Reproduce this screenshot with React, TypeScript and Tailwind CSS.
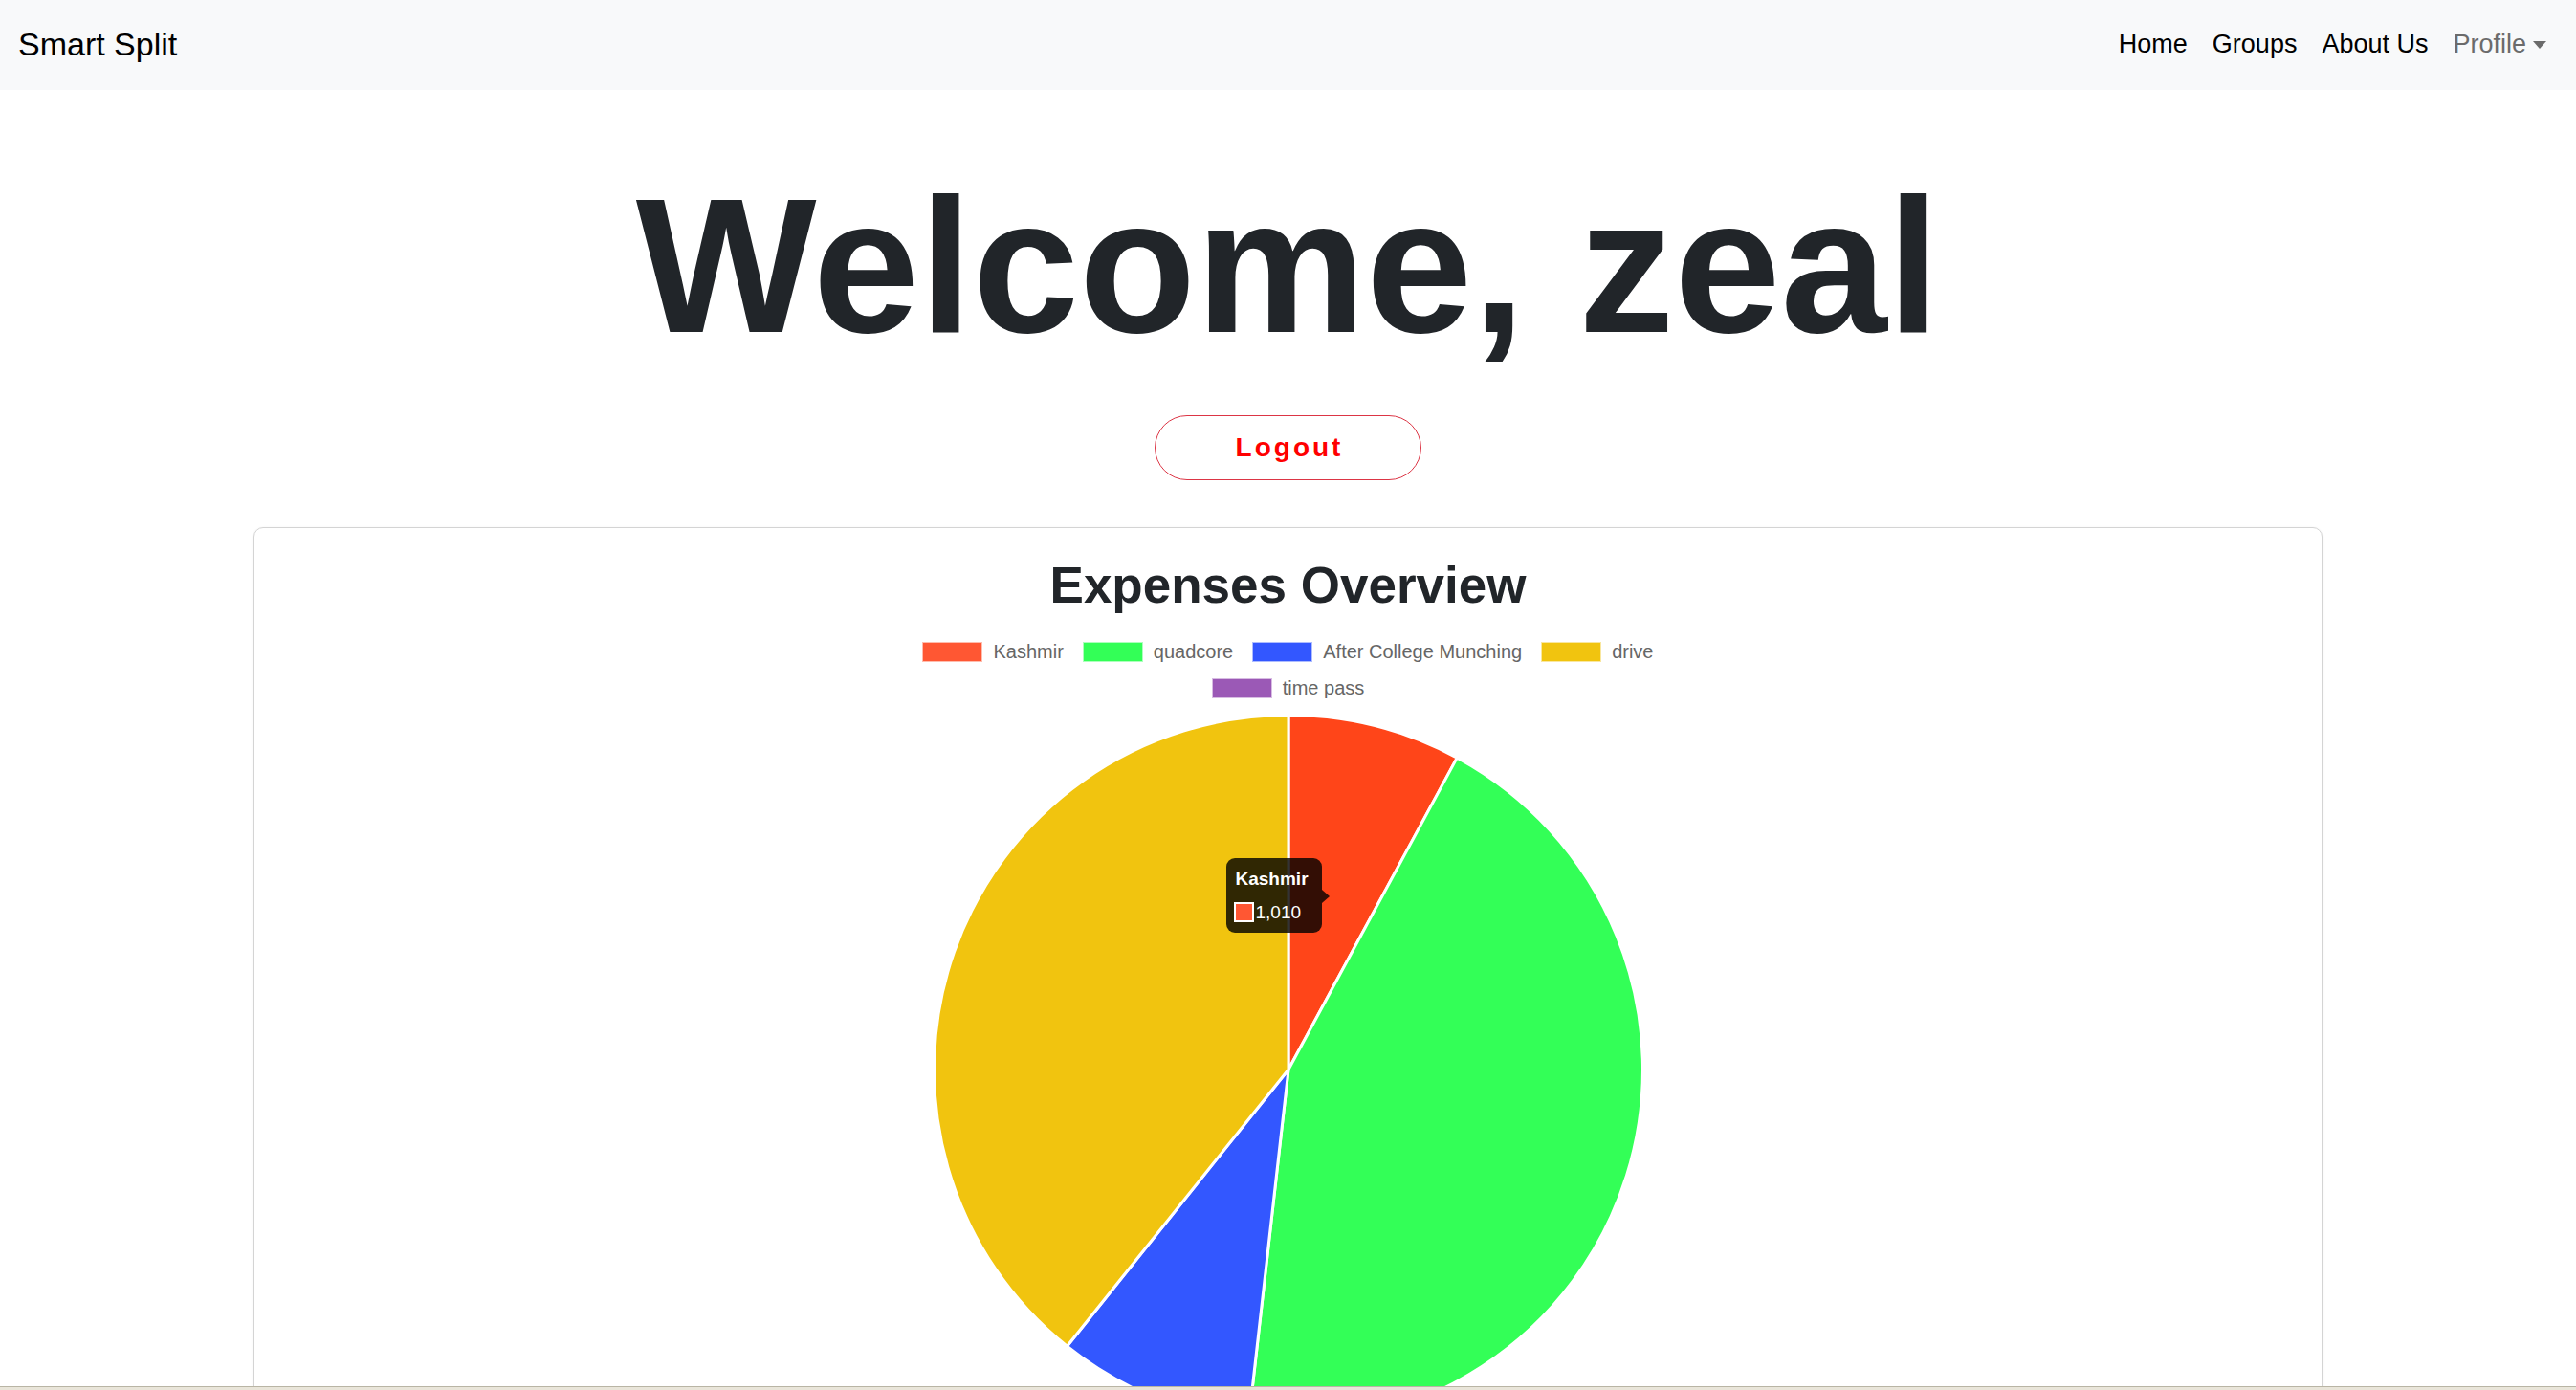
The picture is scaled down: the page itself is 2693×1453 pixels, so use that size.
const slices = [
  { label: "Kashmir", value: 1010, color: "#ff5733", fill: "#ff4519" },
  { label: "quadcore", value: 5620, color: "#33ff57", fill: "#33ff57" },
  { label: "After College Munching", value: 1145, color: "#3357ff", fill: "#3357ff" },
  { label: "drive", value: 5025, color: "#f1c40f", fill: "#f1c40f" },
  { label: "time pass", value: 0, color: "#9b59b6", fill: "#9b59b6" },
];

const legendRows = [slices.slice(0, 4), slices.slice(4)];

function arcPath(cx: number, cy: number, r: number, a0: number, a1: number) {
  const pt = (a: number) => [
    cx + r * Math.sin((a * Math.PI) / 180),
    cy - r * Math.cos((a * Math.PI) / 180),
  ];
  const [x0, y0] = pt(a0);
  const [x1, y1] = pt(a1);
  const large = a1 - a0 > 180 ? 1 : 0;
  return `M${cx},${cy} L${x0},${y0} A${r},${r} 0 ${large} 1 ${x1},${y1} Z`;
}

function Navbar() {
  return (
    <nav className="h-[94px] shrink-0 bg-[#f8f9fa] flex items-center justify-between pl-[19px] pr-[31px] pb-[2px]">
      <a href="#" className="text-[34px] text-black">
        Smart Split
      </a>
      <ul className="flex items-center gap-[26px] text-[27px]">
        <li className="text-black">Home</li>
        <li className="text-black">Groups</li>
        <li className="text-black">About Us</li>
        <li className="flex items-center text-[#6b6b6b]">
          Profile
          <span className="ml-[7px] mt-[2px] w-0 h-0 border-x-[7px] border-x-transparent border-t-[8px] border-t-[#6b6b6b]" />
        </li>
      </ul>
    </nav>
  );
}

function PieChart() {
  const total = slices.reduce((s, d) => s + d.value, 0);
  let start = 0;
  const cx = 380;
  const cy = 380;
  const r = 370.5;

  return (
    <div className="relative w-[760px] h-[760px] mt-[8px] shrink-0">
      <svg width="760" height="760" viewBox="0 0 760 760">
        {slices.map((d) => {
          if (!d.value) return null;
          const a0 = start;
          const a1 = start + (d.value / total) * 360;
          start = a1;
          return (
            <path
              key={d.label}
              d={arcPath(cx, cy, r, a0, a1)}
              fill={d.fill}
              stroke="#ffffff"
              strokeWidth={3}
              strokeLinejoin="round"
            />
          );
        })}
      </svg>

      {/* tooltip */}
      <div className="absolute left-[315px] top-[159px] w-[100px] h-[78px] rounded-[9px] bg-black/80 pl-[8px] pt-[11px] text-white">
        <p className="text-[19px] leading-[22px] font-bold pl-[2px]">Kashmir</p>
        <div className="mt-[13px] h-[21px] flex items-center gap-[2px]">
          <span className="w-[21px] h-[21px] border-2 border-white bg-[#ff5733]" />
          <span className="text-[19px] leading-[21px]">1,010</span>
        </div>
        <span className="absolute left-full top-[33px] w-0 h-0 border-y-[7px] border-y-transparent border-l-[8px] border-l-black/80" />
      </div>
    </div>
  );
}

export default function App() {
  return (
    <div className="h-[1453px] flex flex-col overflow-hidden bg-white font-['Liberation_Sans',Arial,sans-serif]">
      <Navbar />

      <main className="flex-1 overflow-hidden flex flex-col items-center">
        <h1 className="mt-[64px] text-[200px] leading-[240px] font-bold text-[#212529] whitespace-nowrap">
          Welcome, zeal
        </h1>

        <button
          type="button"
          className="mt-[36px] w-[279px] h-[68px] shrink-0 rounded-full border border-[#dc3545] pl-[3px] text-[28px] font-bold tracking-[3px] text-[#ff0000] bg-white"
        >
          Logout
        </button>

        <section className="mt-[49px] w-[2163px] shrink-0 rounded-[10px] border border-[#d4d4d4] shadow-sm pt-[29px] pb-[40px] flex flex-col items-center">
          <h2 className="text-[53px] leading-[62px] font-bold text-[#212529]">
            Expenses Overview
          </h2>

          <div className="mt-[28px] flex flex-col items-center gap-[17px]">
            {legendRows.map((row, i) => (
              <div key={i} className="flex items-center gap-[20px]">
                {row.map((d) => (
                  <div key={d.label} className="flex items-center gap-[11px]">
                    <span
                      className="w-[63px] h-[21px] border border-white/60"
                      style={{ backgroundColor: d.color }}
                    />
                    <span className="text-[20px] leading-[21px] text-[#666666]">
                      {d.label}
                    </span>
                  </div>
                ))}
              </div>
            ))}
          </div>

          <PieChart />
        </section>
      </main>

      <div className="h-[4px] shrink-0 border-t border-[#b9b5a5] bg-[#e9e5d9]" />
    </div>
  );
}
